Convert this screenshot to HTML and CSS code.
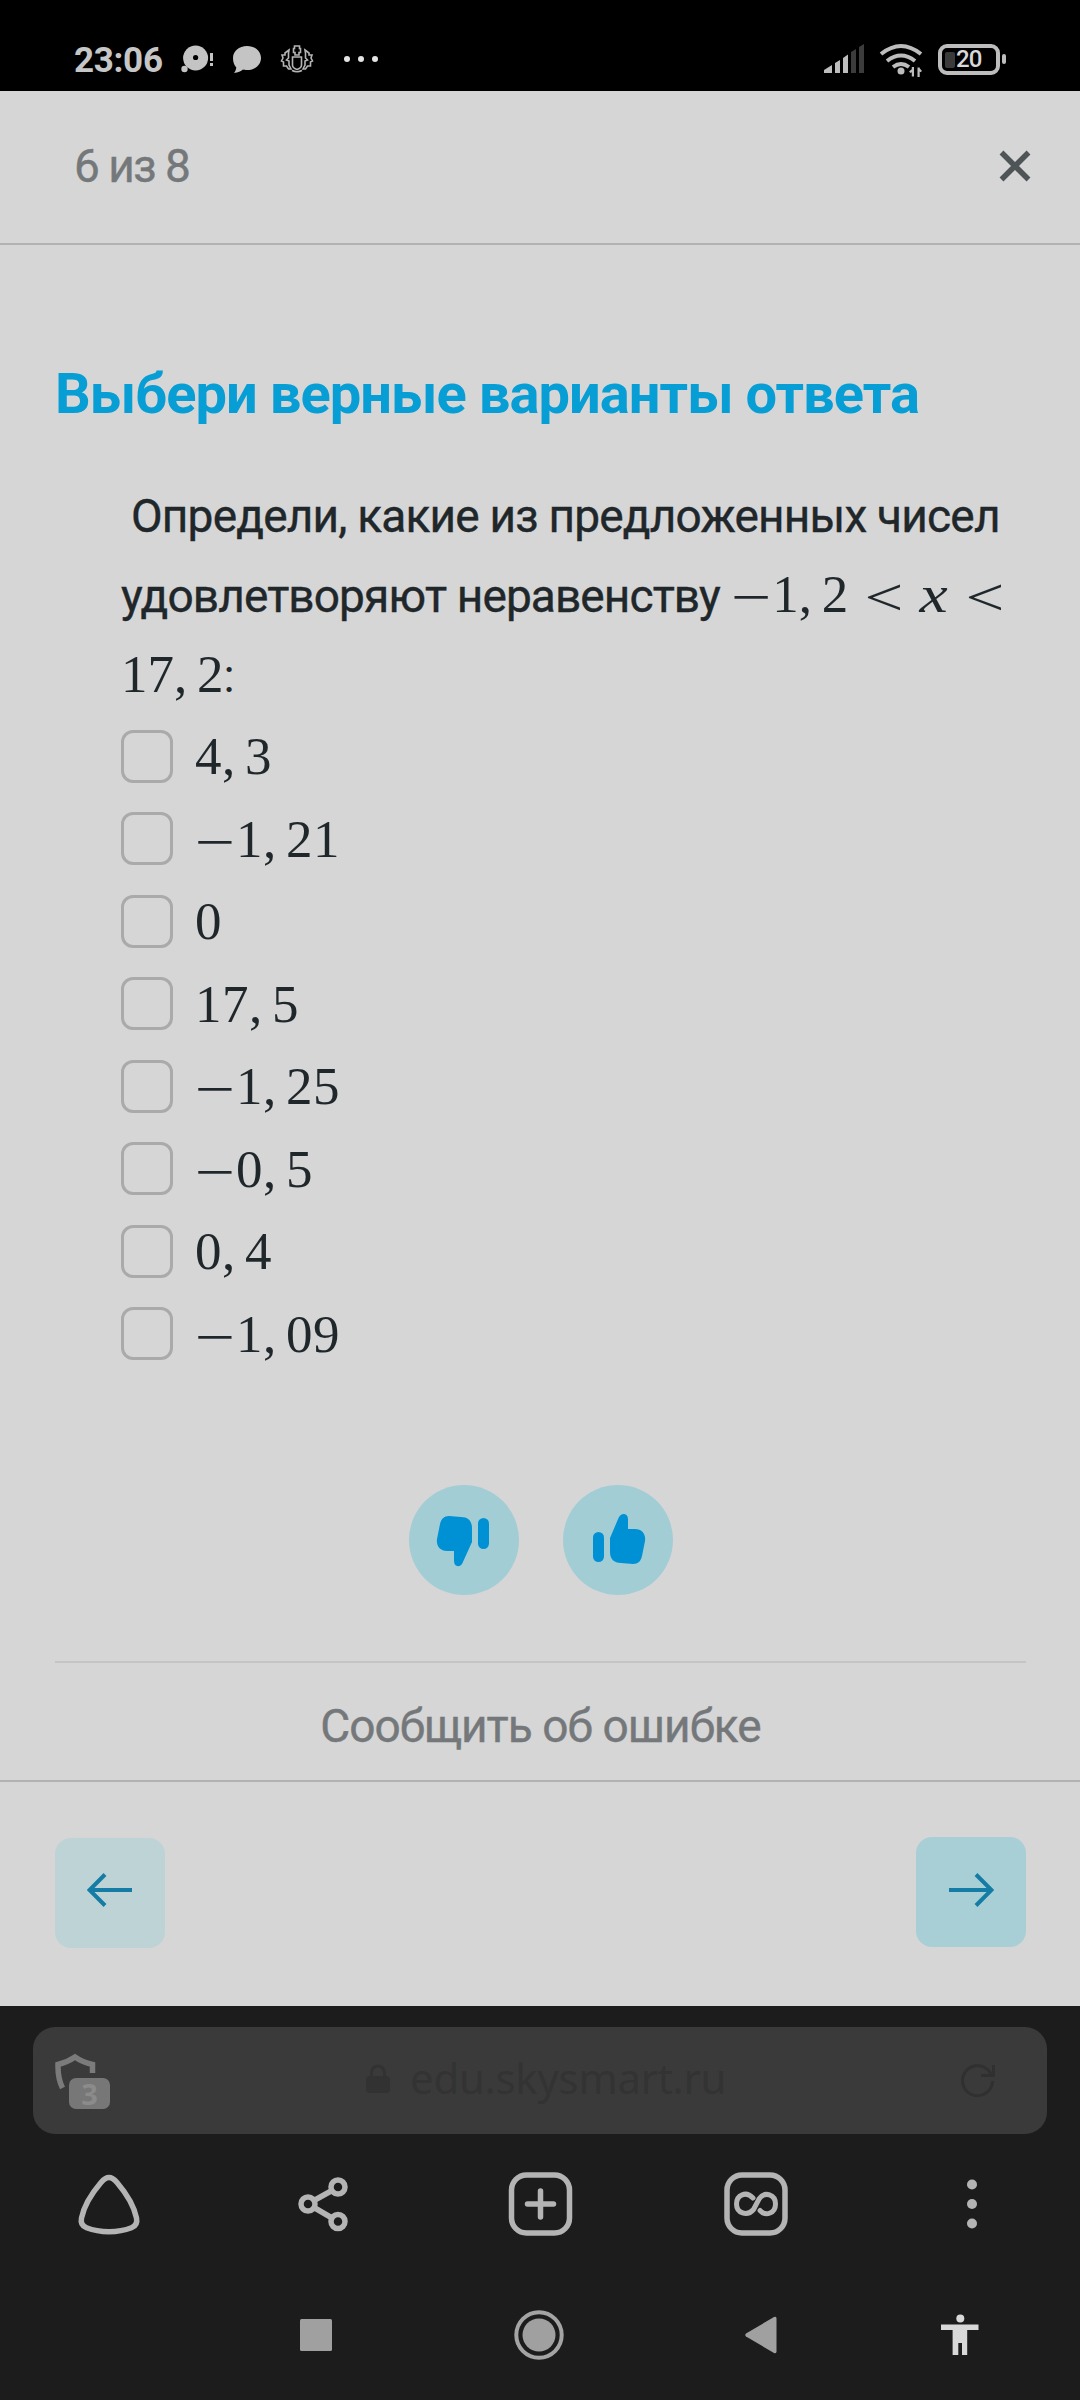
FILE: index.html
```html
<!DOCTYPE html>
<html lang="ru">

<head>
    <meta charset="utf-8">
    <meta name="viewport" content="width=device-width, initial-scale=1.0">
    <title>Выбери верные варианты ответа</title>

    <link rel="stylesheet" href="styles.css">
</head>

<body>

    <div class="status">
        <span class="time">23:06</span>
        <svg class="notif" width="200" height="40" viewBox="180 38 200 40" fill="#c4c4c4">
            <circle cx="195.600" cy="58" r="12.500" />
            <circle cx="195.600" cy="57.500" r="2.600" fill="#000" />
            <circle cx="184.500" cy="69" r="3.200" />
            <path d="M210 53h3v8h-3zM210 63h3v3h-3z" />
            <path d="M247 46c8 0 14 5 14 12s-6 12-14 12c-2 0-3 0-4-.400-2 2-5 3-9 3.400 1-1 2-3 2.300-5.500C234 65 233 62 233 58c0-7 6-12 14-12z" />
            <g fill="none" stroke="#b4b4b4" stroke-width="1.600">
                <path d="M292.500 57h9v8q0 3-4.500 4.500q-4.500-1.500-4.500-4.500z" />
                <path d="M294.500 46h5v2.500h1v4h-1.500v2.500h-4v-2.500h-1.500v-4h1z" />
                <path d="M289 50l-4 3v2h-3l1 3-1.500 3 2 1v4h3l2 3h2.500l-2-4v-4l-2.500-1 2-2v-5z" />
                <path d="M305 50l4 3v2h3l-1 3 1.500 3-2 1v4h-3l-2 3h-2.500l2-4v-4l2.500-1-2-2v-5z" />
                <path d="M292 70.500q5 2.500 10 0" />
            </g>
            <g fill="#e4e4e4">
                <circle cx="347" cy="59" r="3" />
                <circle cx="361" cy="59" r="3" />
                <circle cx="375" cy="59" r="3" />
            </g>
        </svg>
        <svg class="signal" width="104" height="40" viewBox="822 40 104 40" fill="#bdbdbd">
            <path d="M824 73v-3l8-5v8zM835 73v-10l5-3v13zM843 73v-15l5-3.500v18.500z" />
            <path d="M851 73v-21l5-3v24zM859 73v-26l5-3v29z" fill="#3c3c3c" />
            <g fill="none" stroke="#bdbdbd" stroke-width="4">
                <path d="M881 54q20-16 40 0" />
                <path d="M887 61q14-11 28 0" />
                <path d="M893 67q8-6 16 0" />
            </g>
            <circle cx="901" cy="71" r="3.500" />
            <path d="M911.800 76.500v-9.500h2.200v9.500zM912 72l-1.500 1-1.500-1.500 3-2.500zM917.500 67.500h2.200v9.500h-2.200zM919.500 68l2.500 3-1.500 1.200-1-1z" />
        </svg>
        <div class="battery"><span class="charge"></span><span class="percent">20</span></div>
        <span class="nub"></span>
    </div>

    <header class="top">
        <span class="counter">6 из 8</span>
        <svg width="32" height="32" viewBox="0 0 32 32" stroke="#4f5456" stroke-width="5.500">
            <path d="M2.500 2.500l27 27M29.500 2.500l-27 27" />
        </svg>
    </header>

    <main>
        <h1>Выбери верные варианты ответа</h1>
        <p class="task"><span class="l1">Определи, какие из предложенных чисел</span><br><span class="l2">удовлетворяют неравенству</span> <span class="math"><i class="minus">−</i>1<i class="comma">,</i>2<i class="lt">&lt;</i><i class="x">x</i><i class="lt">&lt;</i></span><br><span class="math">17<i class="comma">,</i>2</span>:</p>

        <ul class="answers">
            <li><span class="check"></span><span class="math">4<i class="comma">,</i>3</span></li>
            <li><span class="check"></span><span class="math"><i class="minus">−</i>1<i class="comma">,</i>21</span></li>
            <li><span class="check"></span><span class="math">0</span></li>
            <li><span class="check"></span><span class="math">17<i class="comma">,</i>5</span></li>
            <li><span class="check"></span><span class="math"><i class="minus">−</i>1<i class="comma">,</i>25</span></li>
            <li><span class="check"></span><span class="math"><i class="minus">−</i>0<i class="comma">,</i>5</span></li>
            <li><span class="check"></span><span class="math">0<i class="comma">,</i>4</span></li>
            <li><span class="check"></span><span class="math"><i class="minus">−</i>1<i class="comma">,</i>09</span></li>
        </ul>

        <div class="votes">
            <button class="vote">
                <svg width="110" height="110" viewBox="0 0 110 110">
                    <path d="M40 31L52 32C59 32 63 36 63 43V57L53.500 78C51 83 45 82 45 76V66H38C31 66 27 61 28 54L31 39C32 34 35 31 40 31Z" />
                    <rect x="69" y="33" width="11" height="31" rx="5.500" />
                </svg>
            </button>
            <button class="vote">
                <svg width="110" height="110" viewBox="0 0 110 110">
                    <path d="M70 79L58 78C51 78 47 74 47 67V53L55.500 33C58 27 65 28 65 34V44H72C79 44 83 49 82 56L79 71C78 76 75 79 70 79Z" />
                    <rect x="30" y="47" width="11" height="30" rx="5.500" />
                </svg>
            </button>
        </div>

        <div class="report">Сообщить об ошибке</div>
    </main>

    <footer class="pager">
        <button class="arrow prev">
            <svg width="46" height="36" viewBox="0 0 46 36"><path d="M45 18H3M18 2.500L2.500 18L18 33.500" /></svg>
        </button>
        <button class="arrow">
            <svg width="46" height="36" viewBox="0 0 46 36"><path d="M1 18H43M28 2.500L43.500 18L28 33.500" /></svg>
        </button>
    </footer>

    <div class="browser">
        <div class="address">
            <div class="shield">
                <svg width="42" height="40" viewBox="0 0 42 40" fill="none" stroke="#7b7b7b" stroke-width="5.500">
                    <path d="M7.500 36C4 29 2.800 21 3 12.500C9 11 15 8.500 20 5C25 8.500 31 11 37.500 12.500V21" />
                </svg>
                <span class="blocked">3</span>
            </div>
            <div class="url">
                <svg width="24" height="30" viewBox="0 0 24 30">
                    <rect x="0" y="12" width="24" height="17" rx="4" fill="#323232" />
                    <path d="M5.500 13V8.500a6.500 6.500 0 0 1 13 0V13" fill="none" stroke="#323232" stroke-width="3" />
                </svg>
                <span>edu.skysmart.ru</span>
            </div>
            <svg class="reload" width="38" height="38" viewBox="0 0 38 38" fill="none" stroke="#303030" stroke-width="3">
                <path d="M33.500 19a15 15 0 1 1-4-10.500l3.500 4.500M34.500 3v10.500H22" />
            </svg>
        </div>

        <div class="tools">
            <svg width="68" height="68" viewBox="0 0 68 68">
                <path d="M34 7.500C37 7.500 39 9 42 12.500C51 23 59 36 61.500 48C62.500 53 61 56 56.500 57.700C43 63 25 63 11.500 57.700C7 56 5.500 53 6.500 48C9 36 17 23 26 12.500C29 9 31 7.500 34 7.500Z" />
            </svg>
            <svg width="68" height="68" viewBox="0 0 68 68">
                <circle cx="17" cy="34" r="7" />
                <circle cx="47" cy="17" r="7" />
                <circle cx="47" cy="51.500" r="7" />
                <path d="M23 30.500L41 20.500M23 37.500L41 48" />
            </svg>
            <svg width="68" height="68" viewBox="0 0 68 68">
                <rect x="4.500" y="5" width="58" height="58" rx="15" />
                <path d="M33.500 21v26M20.500 34h26" stroke-linecap="round" />
            </svg>
            <svg width="68" height="68" viewBox="0 0 68 68">
                <rect x="5" y="5" width="58" height="58" rx="15" />
                <path d="M31 28C24 20.500 14.500 25 14.500 34S25 47 31.500 39.500L37 29C43 20.500 53.500 25 53.500 34S44 47 38 40.500" stroke-width="5" stroke-linecap="round" />
            </svg>
            <svg width="68" height="68" viewBox="0 0 68 68" class="fill">
                <circle cx="34" cy="14.500" r="5" />
                <circle cx="34" cy="34" r="5" />
                <circle cx="34" cy="53.500" r="5" />
            </svg>
        </div>

        <div class="nav">
            <svg width="32" height="32" viewBox="0 0 32 32"><rect width="32" height="32" rx="1.500" /></svg>
            <svg class="home" width="50" height="50" viewBox="0 0 50 50">
                <circle cx="25" cy="25" r="22.700" fill="none" stroke="#a4a4a4" stroke-width="4" />
                <circle cx="25" cy="25" r="16.500" />
            </svg>
            <svg class="back" width="32" height="38" viewBox="0 0 32 38"><path d="M1 17.500L29 1q2.500-1 2.500 1.500v33q0 2.500-2.500 1.500L1 20.500q-1.500-1.500 0-3z" /></svg>
            <svg class="person" width="38" height="42" viewBox="0 0 38 42" fill="#d8d8d8">
                <circle cx="19.300" cy="4.500" r="4" />
                <path d="M0 10.500h37.500v5.500H26.200v25h-5.200v-12h-3.700v12h-5.700V16H0z" />
            </svg>
        </div>
    </div>

</body>

</html>
```
FILE: styles.css
```css
* {
    box-sizing: border-box;
}

body {
    margin: 0;
    width: 1080px;
    height: 2400px;
    overflow: hidden;
    background-color: #d6d6d6;
    font-family: Roboto, "Liberation Sans", sans-serif;
    color: #1f272b;
}

svg {
    display: block;
    flex: none;
}

button {
    border: 0;
    padding: 0;
}

.status {
    height: 91px;
    display: flex;
    background-color: #000;
    padding: 0 76px 0 74px;
}

.time {
    width: 106px;
    font-size: 35px;
    line-height: 41px;
    letter-spacing: -0.3px;
    padding-top: 40px;
    font-weight: 700;
    color: #c6c6c6;
}

.notif {
    margin-top: 38px;
}

.signal {
    margin: 40px 12px 0 auto;
}

.battery {
    display: flex;
    align-items: center;
    width: 62px;
    height: 31px;
    margin-top: 44px;
    border: 4px solid #bdbdbd;
    border-radius: 9px;
    padding-left: 3px;
}

.charge {
    width: 10px;
    height: 16px;
    border-radius: 2px;
    background-color: #3a3a3a;
}

.percent {
    margin-left: 1px;
    font-size: 24px;
    line-height: 23px;
    letter-spacing: -1px;
    font-weight: 500;
    color: #d8d8d8;
}

.nub {
    width: 4px;
    height: 10px;
    margin: 54px -2px 0 2px;
    border-radius: 2px;
    background-color: #bdbdbd;
}

.top {
    height: 154px;
    display: flex;
    align-items: center;
    justify-content: space-between;
    padding: 0 49px 2px 74px;
    border-bottom: 2px solid #b2b2b2;
}

.counter {
    font-size: 46px;
    line-height: 50px;
    letter-spacing: -1.5px;
    color: #75787a;
    -webkit-text-stroke: 0.4px;
}

main {
    height: 1537px;
    padding: 114px 54px 0 55px;
    border-bottom: 2px solid #b2b2b2;
}

h1 {
    margin: 0;
    height: 117px;
    font-size: 56px;
    line-height: 70px;
    letter-spacing: -0.95px;
    font-weight: 700;
    color: #079ed5;
    white-space: nowrap;
}

.task {
    margin: 0 0 0 66px;
    height: 239px;
    font-size: 46px;
    line-height: 80px;
    white-space: nowrap;
}

.l1,
.l2 {
    letter-spacing: -0.8px;
    -webkit-text-stroke: 0.4px;
}

.l1 {
    margin-left: 10px;
}

.l2 {
    letter-spacing: -0.9px;
}

.math {
    font-family: "Liberation Serif", serif;
    font-size: 53px;
    line-height: 0;
}

.math i {
    display: inline-block;
    font-style: normal;
    text-align: center;
}

.math .minus {
    width: 41px;
    transform: translate(0, 3px) scaleX(1.35);
}

.math .comma {
    width: 23px;
    text-align: left;
}

.math .lt {
    width: 70px;
    transform: translate(1px, 3px) scaleX(1.3);
}

.math .x {
    width: 31px;
    font-style: italic;
    transform: scaleX(1.2);
}

.answers {
    list-style: none;
    margin: 0 0 110px 66px;
    padding: 0;
}

.answers li {
    display: flex;
    align-items: center;
    gap: 22px;
    height: 82.500px;
}

.answers .math {
    letter-spacing: 0.5px;
}

.check {
    width: 52px;
    height: 53px;
    border: 3px solid #aaa;
    border-radius: 12px;
}

.votes {
    display: flex;
    justify-content: center;
    gap: 44px;
    height: 176px;
}

.vote {
    width: 110px;
    height: 110px;
    border-radius: 50%;
    background-color: #a3cdd5;
    fill: #0091d5;
}

.report {
    border-top: 2px solid #c5c5c5;
    text-align: center;
    font-size: 46px;
    line-height: 126px;
    letter-spacing: -0.95px;
    color: #75787a;
    -webkit-text-stroke: 0.4px;
}

.pager {
    display: flex;
    justify-content: space-between;
    height: 224px;
    padding: 55px 54px 0 55px;
}

.arrow {
    display: flex;
    align-items: center;
    justify-content: center;
    width: 110px;
    height: 110px;
    padding-bottom: 4px;
    border-radius: 16px;
    background-color: #a9cfd6;
    fill: none;
    stroke: #157da5;
    stroke-width: 4px;
}

.prev {
    background-color: #bed3d6;
    margin-top: 1px;
    padding-bottom: 6px;
}

.browser {
    height: 394px;
    padding-top: 21px;
    background-color: #1c1c1c;
}

.address {
    display: flex;
    align-items: center;
    width: 1014px;
    height: 107px;
    margin: 0 auto;
    padding: 0 50px 0 22px;
    border-radius: 22px;
    background-color: #3a3a3a;
}

.shield {
    position: relative;
    width: 55px;
    height: 57px;
}

.blocked {
    position: absolute;
    right: 0;
    bottom: 0;
    width: 41px;
    height: 31px;
    border-radius: 7px;
    background-color: #777;
    box-shadow: 0 0 0 4px #3a3a3a;
    color: #8b8b8b;
    font: 700 29px/31px "Noto Sans", sans-serif;
    text-align: center;
}

.url {
    display: flex;
    align-items: center;
    gap: 20px;
    margin-left: 256px;
    padding-bottom: 5px;
    font: 42px/50px "Noto Sans", sans-serif;
    letter-spacing: -0.3px;
    color: #333;
}

.url svg {
    margin-top: 2px;
}

.reload {
    margin-left: auto;
}

.tools {
    display: flex;
    justify-content: space-between;
    padding: 36px 74px 0 75px;
    fill: none;
    stroke: #b4b4b4;
    stroke-width: 5.500px;
}

.fill {
    fill: #b4b4b4;
    stroke: none;
}

.nav {
    display: flex;
    align-items: center;
    height: 50px;
    margin-top: 72px;
    padding-left: 300px;
    fill: #a0a0a0;
}

.home {
    margin-left: 182px;
}

.back {
    margin-left: 181px;
}

.person {
    margin-left: 164px;
}
```
